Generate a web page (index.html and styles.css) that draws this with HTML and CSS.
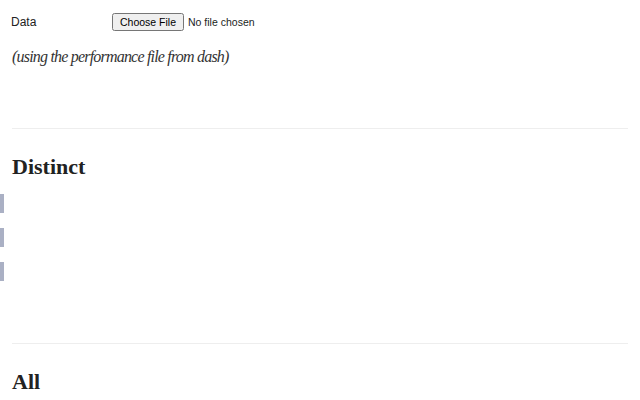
FILE: index.html
```html
<!DOCTYPE html>
<html>
<head>
<meta charset="utf-8">
<link rel="stylesheet" href="styles.css">
</head>
<body>
<div class="page">
  <form class="row">
    <label class="label" for="f">Data</label>
    <input id="f" class="file" type="file">
  </form>
  <p class="note">(using the performance file from dash)</p>
  <hr class="rule rule-first">
  <h2 class="title">Distinct</h2>
  <div class="bars">
    <div class="bar"></div>
    <div class="bar"></div>
    <div class="bar"></div>
  </div>
  <hr class="rule rule-second">
  <h2 class="title">All</h2>
</div>
</body>
</html>
```
FILE: styles.css
```css
html, body {
  margin: 0;
  padding: 0;
  background: #fff;
}
.page {
  padding: 0 12px;
  color: #1b1e23;
  font-family: "Liberation Serif", serif;
}
.row {
  display: flex;
  align-items: center;
  margin: 0;
  padding-top: 14px;
  height: 16px;
}
.label {
  width: 101px;
  margin-left: -1px;
  font-family: "Liberation Sans", Arial, sans-serif;
  font-size: 12px;
  color: #222;
}
.file {
  font-family: "Liberation Sans", Arial, sans-serif;
  font-size: 10.5px;
  margin: 0;
}
.note {
  margin: 16px 0 0;
  font-style: italic;
  font-size: 16px;
  letter-spacing: -0.8px;
  line-height: 22px;
  color: #333;
}
.rule {
  border: 0;
  border-top: 1px solid #eeeeee;
  margin: 0;
}
.rule-first {
  margin-top: 60px;
}
.rule-second {
  margin-top: 62px;
}
.title {
  margin: 24px 0 0;
  font-size: 22px;
  line-height: 28px;
  font-weight: bold;
  color: #222;
}
.bars {
  display: flex;
  flex-direction: column;
  gap: 15px;
  margin: 13px 0 0 -12px;
}
.bar {
  width: 4px;
  height: 19px;
  background: #aab0c4;
}
```
